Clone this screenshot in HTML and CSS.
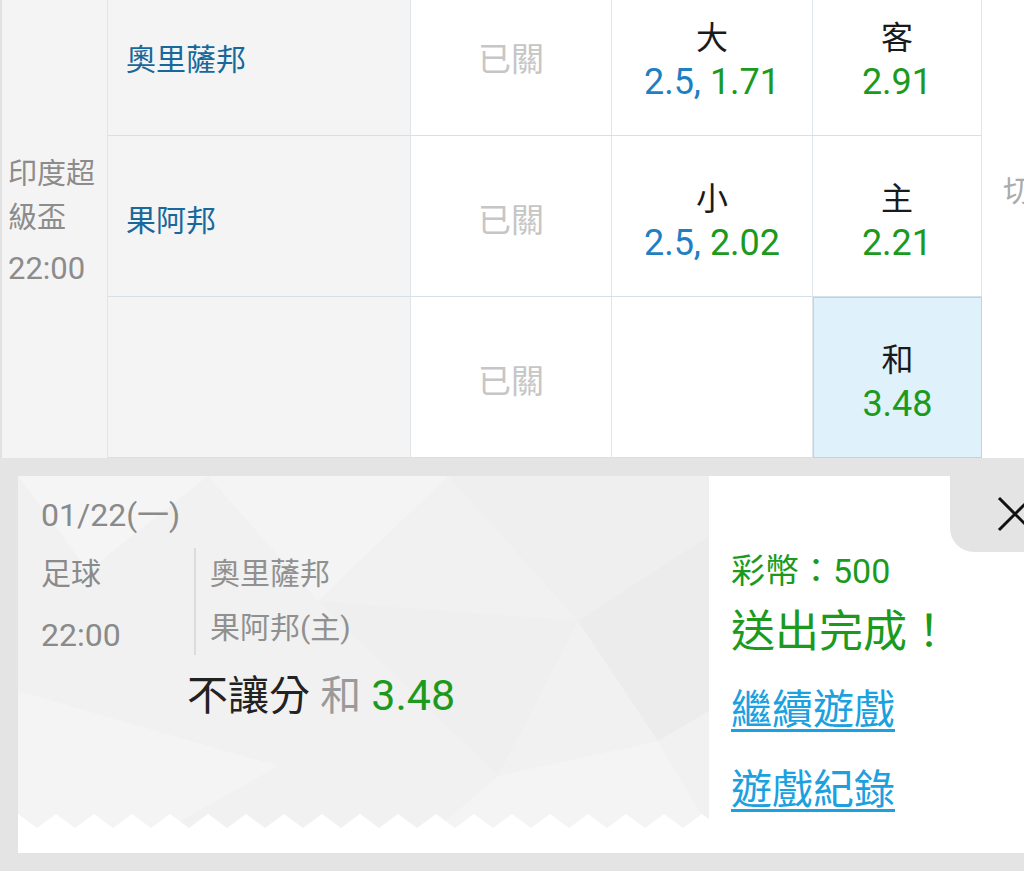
FILE: index.html
```html
<!DOCTYPE html>
<html lang="zh-Hant">
<head>
  <meta charset="UTF-8">
  <title>投注單</title>
  <link rel="stylesheet" href="styles.css">
</head>
<body>

  <div class="odds-table">
    <div class="cell league">
      <div class="league-name">印度超級盃</div>
      <div class="league-time">22:00</div>
    </div>

    <div class="cell team">奧里薩邦</div>
    <div class="cell closed">已關</div>
    <div class="cell odds">
      <span class="pick">大</span>
      <span class="price"><span class="line">2.5,</span> <span class="odd">1.71</span></span>
    </div>
    <div class="cell odds">
      <span class="pick">客</span>
      <span class="price"><span class="odd">2.91</span></span>
    </div>
    <div class="cell side">切</div>

    <div class="cell team">果阿邦</div>
    <div class="cell closed">已關</div>
    <div class="cell odds">
      <span class="pick">小</span>
      <span class="price"><span class="line">2.5,</span> <span class="odd">2.02</span></span>
    </div>
    <div class="cell odds">
      <span class="pick">主</span>
      <span class="price"><span class="odd">2.21</span></span>
    </div>

    <div class="cell team"></div>
    <div class="cell closed">已關</div>
    <div class="cell odds"></div>
    <div class="cell odds selected">
      <span class="pick">和</span>
      <span class="price"><span class="odd">3.48</span></span>
    </div>
  </div>

  <div class="ticket">
    <div class="ticket-info">
      <div class="ticket-body">
        <svg class="facets" viewBox="0 0 691 352" preserveAspectRatio="none">
          <polygon points="0,0 190,0 70,95" fill="#f5f5f5"/>
          <polygon points="190,0 430,0 300,125" fill="#f4f4f4"/>
          <polygon points="430,0 691,0 691,60 560,145" fill="#efefef"/>
          <polygon points="560,145 691,60 691,235 640,265" fill="#ececec"/>
          <polygon points="300,125 560,145 480,300" fill="#efefef"/>
          <polygon points="0,215 260,290 150,352 0,352" fill="#f4f4f4"/>
          <polygon points="480,300 640,265 691,352 420,352" fill="#f4f4f4"/>
        </svg>
        <svg class="zigzag" width="691" height="14">
          <defs>
            <pattern id="teeth" x="19" y="0" width="38" height="14" patternUnits="userSpaceOnUse">
              <polygon points="0,14 19,0 38,14" fill="#fff"/>
            </pattern>
          </defs>
          <rect width="691" height="14" fill="url(#teeth)"/>
        </svg>

        <div class="date">01/22(一)</div>
        <div class="match">
          <div class="match-meta">
            <div>足球</div>
            <div class="kickoff">22:00</div>
          </div>
          <div class="match-teams">
            <div>奧里薩邦</div>
            <div class="home">果阿邦(主)</div>
          </div>
        </div>
        <div class="bet">不讓分 <span class="bet-pick">和</span> <span class="bet-odd">3.48</span></div>
      </div>
    </div>

    <div class="ticket-result">
      <div class="coins">彩幣：500</div>
      <div class="done">送出完成！</div>
      <a class="result-link first" href="#">繼續遊戲</a>
      <a class="result-link" href="#">遊戲紀錄</a>
    </div>

    <div class="close">
      <svg width="36" height="36" viewBox="0 0 36 36">
        <path d="M2 2 L34 34 M34 2 L2 34" stroke="#111" stroke-width="3"/>
      </svg>
    </div>
  </div>

</body>
</html>
```

FILE: styles.css
```css
* {
  box-sizing: border-box;
}

html, body {
  margin: 0;
  padding: 0;
  overflow: hidden;
}

body {
  font-family: Roboto, "Noto Sans CJK TC", sans-serif;
  background: #e4e4e4;
  width: 1024px;
  height: 871px;
}

/* odds table */

.odds-table {
  display: grid;
  grid-template-columns: 108px 303px 201px 201px 169px 60px;
  grid-template-rows: repeat(3, 161px);
  margin-top: -25px;
  background: #fff;
}

.cell {
  display: flex;
  flex-direction: column;
  align-items: center;
  justify-content: center;
  padding-top: 9px;
  line-height: 44px;
  border-right: 1px solid #e0e5e9;
  border-bottom: 1px solid #d3e1ea;
}

.league {
  grid-row: 1 / 4;
  align-items: flex-start;
  padding-left: 6px;
  background: #f4f4f4;
  border-left: 2px solid #e2e2e2;
  border-bottom: none;
  color: #8c8c8c;
  font-size: 29px;
}

.league-time {
  margin-top: 7px;
  font-size: 31px;
}

.team {
  align-items: flex-start;
  padding-left: 18px;
  background: #f4f4f4;
  color: #17689b;
  font-size: 30px;
}

.closed {
  color: #c6c6c6;
  font-size: 33px;
}

.pick {
  color: #1a1a1a;
  font-size: 32px;
}

.price {
  font-size: 36px;
  white-space: pre;
}

.line {
  color: #1f7fc3;
}

.odd {
  color: #1b9a1d;
}

.selected {
  background: #dff1fb;
  border: 1px solid #b6d7ea;
}

.side {
  grid-column: 6;
  grid-row: 1 / 4;
  align-items: flex-start;
  justify-content: flex-start;
  padding: 194px 0 0 21px;
  border: none;
  color: #ababab;
  font-size: 30px;
}

/* ticket */

.ticket {
  position: relative;
  display: flex;
  height: 377px;
  margin: 18px 0 0 18px;
  background: #fff;
}

.ticket-info {
  width: 691px;
  padding-bottom: 25px;
  display: flex;
  flex-direction: column;
}

.ticket-body {
  position: relative;
  flex: 1;
  padding: 17px 0 0 23px;
  background: #f1f1f1;
  color: #8a8a8a;
  font-size: 30px;
  line-height: 44px;
}

.facets {
  position: absolute;
  top: 0;
  left: 0;
  width: 100%;
  height: 100%;
}

.zigzag {
  position: absolute;
  left: 0;
  bottom: 0;
}

.date,
.match,
.bet {
  position: relative;
}

.date {
  font-size: 32px;
}

.match {
  display: flex;
  align-items: flex-start;
  margin-top: 11px;
}

.match-meta {
  width: 153px;
  padding-top: 4px;
}

.kickoff {
  margin-top: 17px;
  font-size: 32px;
}

.match-teams {
  padding: 4px 0 5px 14px;
  border-left: 2px solid #dcdcdc;
  color: #909090;
}

.home {
  margin-top: 10px;
}

.bet {
  margin: 13px 0 0 146px;
  color: #222;
  font-size: 41px;
  line-height: 50px;
}

.bet-pick {
  color: #9a9a9a;
}

.bet-odd {
  color: #1b9a1d;
  font-size: 43px;
}

.ticket-result {
  flex: 1;
  display: flex;
  flex-direction: column;
  align-items: flex-start;
  padding: 73px 0 0 22px;
  color: #1b9a1d;
}

.coins {
  font-size: 34px;
  line-height: 44px;
}

.done {
  margin-top: 11px;
  font-size: 44px;
  line-height: 56px;
}

.result-link {
  margin-top: 28px;
  color: #1ba1e0;
  font-size: 41px;
  line-height: 52px;
  text-decoration: underline;
  text-decoration-thickness: 3px;
  text-underline-offset: 5px;
}

.result-link.first {
  margin-top: 24px;
}

.close {
  position: absolute;
  top: 0;
  right: -56px;
  width: 130px;
  height: 76px;
  display: flex;
  align-items: center;
  justify-content: center;
  background: #e4e4e4;
  border-bottom-left-radius: 24px;
}
```
